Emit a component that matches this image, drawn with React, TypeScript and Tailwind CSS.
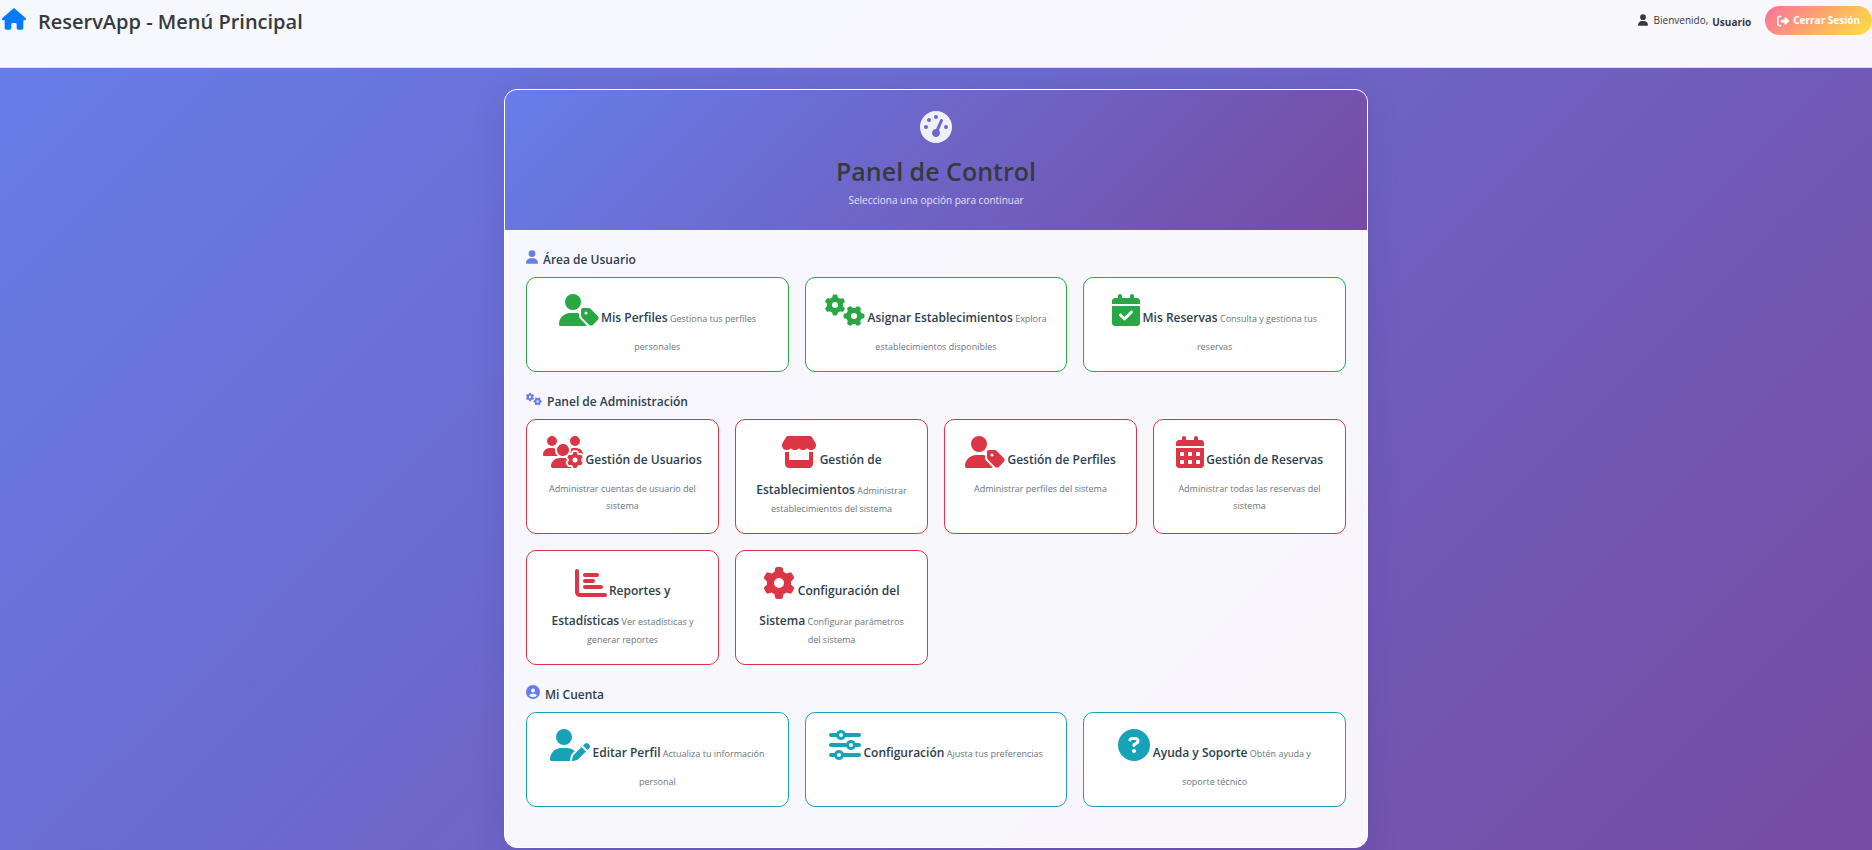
import { Fragment } from "react";
import type { IconType } from "react-icons";
import {
  FaCalendarCheck,
  FaCalendarDays,
  FaChartBar,
  FaCircleQuestion,
  FaCircleUser,
  FaGaugeHigh,
  FaGear,
  FaGears,
  FaHouse,
  FaRightFromBracket,
  FaSliders,
  FaStore,
  FaUser,
  FaUserPen,
  FaUserTag,
  FaUsersGear,
} from "react-icons/fa6";

type Option = {
  icon: IconType;
  iconWidth: string;
  // A newline marks where the label wraps.
  title: string;
  description: string;
};

type Section = {
  heading: string;
  icon: IconType;
  iconWidth: string;
  columns: string;
  border: string;
  color: string;
  options: Option[];
};

const sections: Section[] = [
  {
    heading: "Área de Usuario",
    icon: FaUser,
    iconWidth: "w-3",
    columns: "grid-cols-3",
    border: "border-[#28a745]",
    color: "text-[#28a745]",
    options: [
      { icon: FaUserTag, iconWidth: "w-10", title: "Mis Perfiles", description: "Gestiona tus perfiles\npersonales" },
      { icon: FaGears, iconWidth: "w-10", title: "Asignar Establecimientos", description: "Explora\nestablecimientos disponibles" },
      { icon: FaCalendarCheck, iconWidth: "w-7", title: "Mis Reservas", description: "Consulta y gestiona tus\nreservas" },
    ],
  },
  {
    heading: "Panel de Administración",
    icon: FaGears,
    iconWidth: "w-4",
    columns: "grid-cols-4",
    border: "border-[#dc3545]",
    color: "text-[#dc3545]",
    options: [
      { icon: FaUsersGear, iconWidth: "w-10", title: "Gestión de Usuarios", description: "\nAdministrar cuentas de usuario del\nsistema" },
      { icon: FaStore, iconWidth: "w-9", title: "Gestión de\nEstablecimientos", description: "Administrar\nestablecimientos del sistema" },
      { icon: FaUserTag, iconWidth: "w-10", title: "Gestión de Perfiles", description: "\nAdministrar perfiles del sistema" },
      { icon: FaCalendarDays, iconWidth: "w-7", title: "Gestión de Reservas", description: "\nAdministrar todas las reservas del\nsistema" },
      { icon: FaChartBar, iconWidth: "w-8", title: "Reportes y\nEstadísticas", description: "Ver estadísticas y\ngenerar reportes" },
      { icon: FaGear, iconWidth: "w-8", title: "Configuración del\nSistema", description: "Configurar parámetros\ndel sistema" },
    ],
  },
  {
    heading: "Mi Cuenta",
    icon: FaCircleUser,
    iconWidth: "w-3.5",
    columns: "grid-cols-3",
    border: "border-[#17a2b8]",
    color: "text-[#17a2b8]",
    options: [
      { icon: FaUserPen, iconWidth: "w-10", title: "Editar Perfil", description: "Actualiza tu información\npersonal" },
      { icon: FaSliders, iconWidth: "w-8", title: "Configuración", description: "Ajusta tus preferencias" },
      { icon: FaCircleQuestion, iconWidth: "w-8", title: "Ayuda y Soporte", description: "Obtén ayuda y\nsoporte técnico" },
    ],
  },
];

function Lines({ text, className }: { text: string; className: string }) {
  return text.split("\n").map((line, index) => (
    <Fragment key={index}>
      {index > 0 && <br />}
      {line && <span className={className}>{line}</span>}
    </Fragment>
  ));
}

function OptionCard({ option, border, color }: { option: Option; border: string; color: string }) {
  const Icon = option.icon;
  return (
    <a href="#" className={`block rounded-[10px] border bg-white py-4 text-center text-[9px] leading-[17px] ${border}`}>
      <Icon className={`mb-3 inline-block h-8 align-[-16px] ${option.iconWidth} ${color}`} />{" "}
      <Lines text={option.title} className="text-[12px] leading-5 font-semibold text-[#2c3e50]" />{" "}
      <Lines text={option.description} className="text-[#6c757d]" />
    </a>
  );
}

export default function App() {
  return (
    <div className="flex min-h-screen flex-col bg-linear-[135deg,#667eea,#764ba2] font-['Open_Sans','Noto_Sans',sans-serif]">
      <header className="flex h-17 items-start justify-between border-b border-[#dcdce6] bg-white/95 text-[#343a40]">
        <div className="flex items-start pl-0.5">
          <FaHouse className="mt-2 h-[22px] w-6 text-[#007bff]" />
          <h1 className="mt-2 ml-3 text-[20px] leading-7 font-semibold">ReservApp - Menú Principal</h1>
        </div>
        <div className="flex items-start pt-1.5 text-[10px]">
          <FaUser className="mt-2 h-3 w-2.5" />
          <span className="ml-1.5 leading-7">Bienvenido,</span>
          <strong className="mt-0.5 ml-1 leading-7 font-bold">Usuario</strong>
          <button
            type="button"
            className="ml-3.5 flex h-[29px] items-center gap-1 rounded-full bg-linear-[135deg,#fa709a,#fee140] px-3 font-bold text-white"
          >
            <FaRightFromBracket className="size-3" />
            Cerrar Sesión
          </button>
        </div>
      </header>

      <main className="mx-auto mt-[21px] w-full max-w-[864px] overflow-hidden rounded-[13px] border border-white bg-white/95 shadow-[0_8px_32px_rgba(31,38,135,0.15)]">
        <div className="flex h-[140px] flex-col items-center bg-linear-[135deg,#667eea,#764ba2] pt-[21px]">
          <FaGaugeHigh className="size-8 text-white/90" />
          <h2 className="mt-2.5 text-[25px] leading-9 font-semibold text-[#343a40]">Panel de Control</h2>
          <p className="mt-px text-[10px] leading-5 text-white/80">Selecciona una opción para continuar</p>
        </div>

        <div className="flex flex-col gap-5 px-[21px] pt-5 pb-10">
          {sections.map((section) => {
            const Icon = section.icon;
            return (
              <section key={section.heading}>
                <h3 className="flex h-[27px] items-start text-[12px] leading-5 font-semibold text-[#2c3e50]">
                  <Icon className={`mr-[5px] h-3.5 text-[#667eea] ${section.iconWidth}`} />
                  {section.heading}
                </h3>
                <div className={`grid gap-4 ${section.columns}`}>
                  {section.options.map((option) => (
                    <OptionCard key={option.title} option={option} border={section.border} color={section.color} />
                  ))}
                </div>
              </section>
            );
          })}
        </div>
      </main>
    </div>
  );
}
